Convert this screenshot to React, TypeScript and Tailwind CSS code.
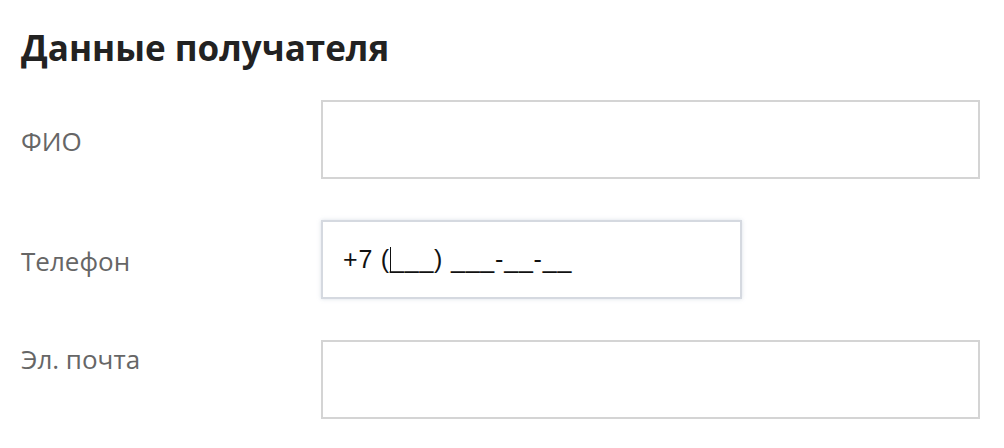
import React from "react";

export default function App() {
  return (
    <div className="w-[1004px] h-[448px] bg-white overflow-hidden pl-[21px] pt-[23px]" style={{ fontFamily: '"Open Sans", sans-serif' }}>
      <h1 className="text-[35px] leading-[49px] font-bold text-[#222222]">Данные получателя</h1>
      <div className="mt-[28px] flex flex-col gap-[41px]">
        <div className="flex items-center">
          <div className="w-[300px] text-[26px] leading-[34px] text-[#666666] pt-[2px]">ФИО</div>
          <div className="w-[659px] h-[79px] border-2 border-[#d4d4d4] bg-white" />
        </div>
        <div className="flex items-center">
          <div className="w-[300px] text-[26px] leading-[34px] text-[#666666] pt-[2px]">Телефон</div>
          <div className="w-[421px] h-[79px] border-2 border-[#d5d9e0] bg-white shadow-[0_0_4px_rgba(150,165,190,0.35)] flex items-center pl-[20px]">
            <span className="text-[25px] text-[#111111] whitespace-pre tracking-[0.8px]" style={{ fontFamily: '"Liberation Sans", Arial, sans-serif' }}>
              +7 (<span className="inline-block w-[1.5px] h-[26px] bg-[#111111] align-[-5px] -mr-[1.5px]" />___) ___-__-__
            </span>
          </div>
        </div>
        <div className="flex items-start">
          <div className="w-[300px] text-[26px] leading-[34px] text-[#666666] pt-[2px]">Эл. почта</div>
          <div className="w-[659px] h-[79px] border-2 border-[#d4d4d4] bg-white" />
        </div>
      </div>
    </div>
  );
}
